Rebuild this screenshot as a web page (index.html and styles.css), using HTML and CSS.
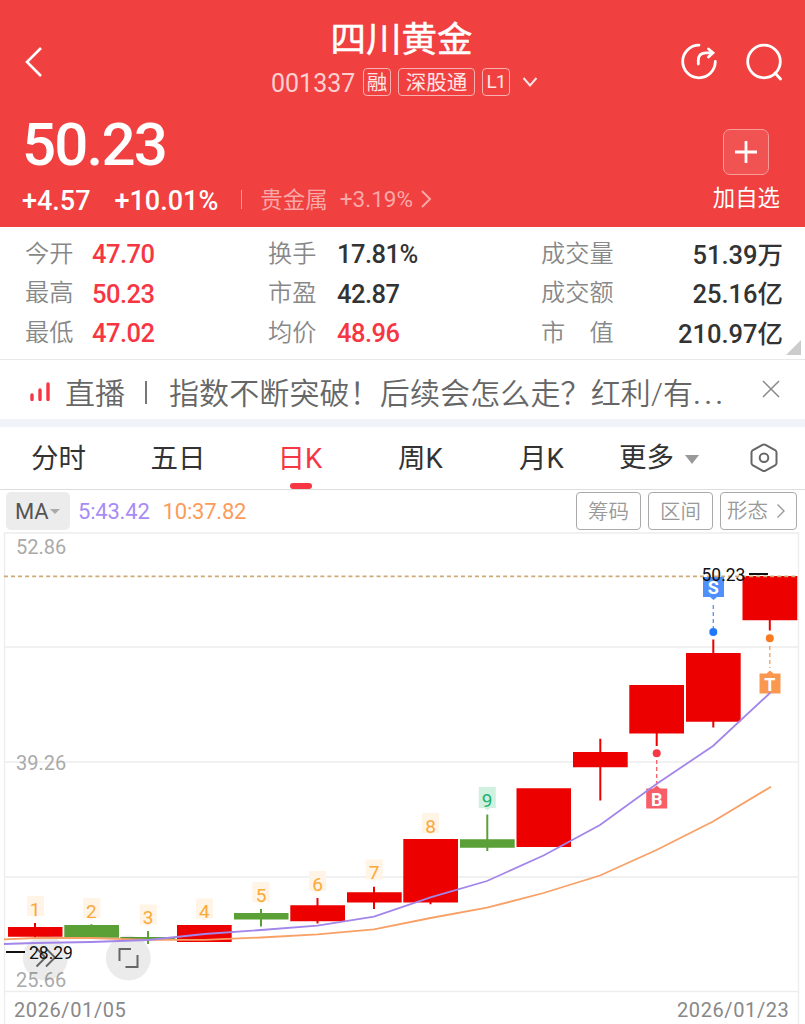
FILE: index.html
```html
<!DOCTYPE html>
<html lang="zh-CN">
  <head>
    <meta charset="utf-8">
    <title>四川黄金 001337</title>
    <link rel="stylesheet" href="styles.css">
  </head>
  <body>
    <header class="header">
      <div class="nav">
        <svg class="back" width="20" height="32" viewBox="0 0 20 32"><path d="M17 2 3 16l14 14"/></svg>
        <div class="stock">
          <h1>四川黄金</h1>
          <div class="code-row">
            <span class="code">001337</span>
            <span class="tag">融</span>
            <span class="tag tag-wide">深股通</span>
            <span class="tag tag-level">L1</span>
            <svg class="down" width="16" height="12" viewBox="0 0 16 12"><path d="M1.500 2 8 9.500 14.500 2"/></svg>
          </div>
        </div>
        <div class="nav-icons">
          <svg width="40" height="40" viewBox="0 0 40 40"><path d="M20 3.200A16.300 16.300 0 1 0 36.300 19.500M19.300 22V18.500Q19.300 10.800 27 10.800H33M29.500 7 34 10.800 29.500 15"/></svg>
          <svg width="40" height="40" viewBox="0 0 40 40"><circle cx="20" cy="19.500" r="16.300"/><path d="m31 31 5.500 6"/></svg>
        </div>
      </div>
      <div class="quote">
        <div>
          <div class="price">50.23</div>
          <div class="change">
            <span>+4.57</span>
            <span class="pct">+10.01%</span>
            <i class="sep"></i>
            <span class="sector">贵金属</span>
            <span class="sector-pct">+3.19%</span>
            <svg width="12" height="18" viewBox="0 0 12 18"><path d="m2 1 8 8-8 8"/></svg>
          </div>
        </div>
        <div class="add">
          <div class="add-box"><svg width="24" height="24" viewBox="0 0 24 24"><path d="M12 1v22M1 12h22"/></svg></div>
          <span>加自选</span>
        </div>
      </div>
    </header>

    <section class="stats">
      <span class="label">今开</span><b class="up">47.70</b>
      <span class="label">换手</span><b>17.81%</b>
      <span class="label">成交量</span><b class="right">51.39万</b>
      <span class="label">最高</span><b class="up">50.23</b>
      <span class="label">市盈</span><b>42.87</b>
      <span class="label">成交额</span><b class="right">25.16亿</b>
      <span class="label">最低</span><b class="up">47.02</b>
      <span class="label">均价</span><b class="up">48.96</b>
      <span class="label">市　值</span><b class="right">210.97亿</b>
      <i class="corner"></i>
    </section>

    <section class="notice">
      <svg class="live" width="20" height="20" viewBox="0 0 20 20"><path d="M2 13v4.500M10 8v9.500M18 2v15.500"/></svg>
      <span class="live-label">直播</span>
      <i class="bar"></i>
      <span class="live-text">指数不断突破！后续会怎么走？红利/有<span class="dots">...</span></span>
      <svg class="close" width="18" height="18" viewBox="0 0 18 18"><path d="m1 1 16 16M17 1 1 17"/></svg>
    </section>

    <nav class="tabs">
      <span>分时</span>
      <span>五日</span>
      <span class="active">日K</span>
      <span>周K</span>
      <span>月K</span>
      <div class="more">
        更多
        <i class="caret"></i>
        <svg width="30" height="32" viewBox="0 0 30 32"><path d="M13.500 2.800Q15 2 16.500 2.800L26 8Q27.500 9 27.500 10.500V21Q27.500 22.500 26 23.500L16.500 28.700Q15 29.500 13.500 28.700L4 23.500Q2.500 22.500 2.500 21V10.500Q2.500 9 4 8Z"/><circle cx="15" cy="15.700" r="4.300"/></svg>
      </div>
    </nav>

    <section class="tools">
      <span class="ma">MA<i class="caret small"></i></span>
      <span class="ma5">5:43.42</span>
      <span class="ma10">10:37.82</span>
      <span class="btn first">筹码</span>
      <span class="btn">区间</span>
      <span class="btn btn-arrow">形态<svg width="10" height="16" viewBox="0 0 10 16"><path d="m1.500 1.500 6.500 6.500-6.500 6.500"/></svg></span>
    </section>

    <svg class="chart" width="805" height="492" viewBox="0 532 805 492">
      <g class="grid">
        <path d="M4.500 1024V533H798.500V1024M4 647H798M4 762H798M4 877H798M4 991.500H798"/>
      </g>
      <text class="axis" x="16" y="553.500">52.86</text>
      <text class="axis" x="16" y="770">39.26</text>
      <text class="axis" x="16" y="986.500">25.66</text>

      <g class="red">
        <path d="M8 927h54.500v9.700H8zM34 923h2v15h-2z"/>
        <path d="M177 925h54.700v17H177z"/>
        <path d="M290.300 905.300H345v16h-54.700zM316.500 898h2v25.500h-2z"/>
        <path d="M347 892.300h54.700v10.200H347zM373 886.700h2V909h-2z"/>
        <path d="M403.300 839H458v63.500h-54.700zM429.500 902h2v2.300h-2z"/>
        <path d="M516.500 788.300H571V847h-54.500z"/>
        <path d="M573 752h54.700v15.300H573zM599.300 738.700h2v61.800h-2z"/>
        <path d="M629.300 685H684v48.500h-54.700zM655.700 733h2v13h-2z"/>
        <path d="M686 653h54.700v68.700H686zM712.300 639.500h2v88h-2z"/>
        <path d="M742.500 576H797.300v44.300h-54.800zM768.800 620h2v10.500h-2z"/>
      </g>
      <g class="green">
        <path d="M64.300 925H119v12.800H64.300zM90.500 924.300h2V939h-2z"/>
        <path d="M120.500 937h54.700v2h-54.700zM147 931h2v13h-2z"/>
        <path d="M234 913h54.500v6.500H234zM260 909h2v17.500h-2z"/>
        <path d="M460 839.300h54.700v8.500H460zM486.300 814.500h2V851h-2z"/>
      </g>
      <path class="high-line" d="M4 576.300H798"/>

      <g class="marker sell">
        <path d="M703 577h21v20h-7l-3.500 3-3.500-3h-7z"/>
        <path class="lead" d="M713.300 605v23"/>
        <circle cx="713.300" cy="632" r="4"/>
        <text x="713.300" y="593.500">S</text>
      </g>
      <g class="marker trade">
        <path d="M759.500 673.500h7l3.500-3 3.500 3h7v20h-21z"/>
        <path class="lead" d="M769.800 646v22"/>
        <circle cx="769.800" cy="638.300" r="4"/>
        <text x="769.800" y="690.500">T</text>
      </g>
      <g class="marker buy">
        <path d="M646.200 788.500h7l3.500-3 3.500 3h7v20h-21z"/>
        <path class="lead" d="M656.700 760v25"/>
        <circle cx="656.700" cy="753.300" r="4"/>
        <text x="656.700" y="805.500">B</text>
      </g>

      <g class="seq">
        <path d="M27 896h17v20h-6l-3 2-3-2h-5zM83.300 898h17v20h-6l-3 2-3-2h-5zM139.800 904.500h17v20h-6l-3 2-3-2h-5zM196 898.500h17v20h-6l-3 2-3-2h-5zM252.500 882h17v20h-6l-3 2-3-2h-5zM309 871h17v20h-6l-3 2-3-2h-5zM365.700 859.500h17v20h-6l-3 2-3-2h-5zM422 813h17v20h-6l-3 2-3-2h-5z"/>
        <text x="35" y="915.500">1</text>
        <text x="91.300" y="917.500">2</text>
        <text x="148" y="924">3</text>
        <text x="204.300" y="918">4</text>
        <text x="261" y="901.500">5</text>
        <text x="317.500" y="890.500">6</text>
        <text x="374" y="879">7</text>
        <text x="430.500" y="832.500">8</text>
      </g>
      <g class="seq nine">
        <path d="M478.800 787h17v21h-5.500l-3 2.500-3-2.500h-5.500z"/>
        <text x="487.200" y="806.500">9</text>
      </g>

      <g class="fab">
        <circle cx="45.300" cy="958" r="22.500"/>
        <circle cx="128.300" cy="958" r="22.500"/>
        <path d="m36.500 948.500 9 9-9 9M46 948.500l9 9-9 9"/>
        <path d="M119.500 961V949H131M137.500 955v12H125.500"/>
      </g>

      <polyline class="line10" points="4,939.300 35,938 91,938 148,939.800 204.500,939.800 261,937.500 317.500,934.300 374,929.300 430.500,918 487,907.700 543.500,893 600,875.500 656.500,850 713,821.500 771,786.700"/>
      <polyline class="line5" points="4,944 35,943 91,942 148,940 204.500,934 261,930 317.500,925.700 374,916.700 430.500,897.300 487,881 543.500,855.500 600,825 656.500,784 713,746 770.500,692.500"/>

      <path class="tick" d="M749 574H768M6 952H25"/>
      <text class="extreme" x="701.500" y="581">50.23</text>
      <text class="extreme" x="29" y="959">28.29</text>

      <text class="date" x="14" y="1017">2026/01/05</text>
      <text class="date" x="677" y="1017">2026/01/23</text>
    </svg>
  </body>
</html>
```
FILE: styles.css
```css
* {
  box-sizing: border-box;
}

body {
  margin: 0;
  width: 805px;
  height: 1024px;
  overflow: hidden;
  background: #fff;
  color: #333;
  font-family: Roboto, "Noto Sans CJK SC", sans-serif;
}

svg {
  display: block;
  flex: none;
  fill: none;
  stroke: currentColor;
  stroke-width: 2;
}

i {
  display: block;
  flex: none;
}

/* header */
.header {
  height: 227px;
  background: #f04040;
  color: #fff;
}

.nav {
  display: grid;
  grid-template-columns: 1fr 276px 1fr;
  align-items: center;
  height: 123px;
  padding: 0 21px 0 24px;
}

.back {
  stroke-width: 2.6;
}

.stock {
  padding-bottom: 9px;
}

.stock h1 {
  margin: 0 0 6px;
  padding-right: 5px;
  font-size: 35.5px;
  font-weight: 400;
  line-height: 44px;
  text-align: center;
  -webkit-text-stroke: 0.5px #fff;
}

.code-row {
  display: flex;
  align-items: center;
  height: 28px;
  color: #fcd0d0;
}

.code {
  width: 97px;
  padding-left: 5px;
  padding-top: 2px;
  font-size: 25px;
}

.tag {
  width: 28px;
  height: 28px;
  margin-right: 7px;
  border: 1px solid #f9b0b0;
  border-radius: 4px;
  color: #ffe4e4;
  font-size: 20.5px;
  line-height: 28px;
  text-align: center;
}

.tag-wide {
  width: 77px;
}

.tag-level {
  margin-right: 12px;
  font-size: 19px;
  line-height: 26px;
  letter-spacing: -1px;
}

.down {
  stroke: #ffe4e4;
}

.nav-icons {
  display: flex;
  justify-content: flex-end;
  gap: 25px;
}

.nav-icons svg {
  stroke-width: 2.8;
  stroke-linecap: round;
}

.quote {
  display: flex;
  justify-content: space-between;
  padding: 0 25px 0 22px;
}

.price {
  height: 61px;
  font-size: 60px;
  font-weight: 500;
  line-height: 44px;
  letter-spacing: -1.8px;
}

.change {
  display: flex;
  align-items: center;
  height: 32px;
  padding-top: 1px;
  font-size: 27px;
  font-weight: 500;
}

.pct {
  margin-left: 24px;
}

.sep {
  width: 1px;
  height: 19px;
  margin: -3px 18px 0 23px;
  background: #f79b9b;
}

.sector,
.sector-pct {
  margin-top: -6px;
  color: #f9a8a8;
  font-size: 22.5px;
  font-weight: 400;
}

.sector-pct {
  margin: -3px 8px 0 12px;
}

.change svg {
  margin-top: -4px;
  margin-left: -1px;
  stroke: #f9a8a8;
}

.add {
  display: flex;
  flex-direction: column;
  align-items: center;
  padding-top: 6px;
  font-size: 22.4px;
  line-height: 32px;
}

.add-box {
  display: flex;
  align-items: center;
  justify-content: center;
  width: 46px;
  height: 46px;
  margin-bottom: 7px;
  border: 1px solid #f89c9c;
  border-radius: 7px;
  background: #f15353;
}

.add-box svg {
  stroke-width: 2.8;
}

/* figures */
.stats {
  position: relative;
  display: grid;
  grid-template-columns: 67px 176px 69px 204px 80px 1fr;
  grid-auto-rows: 39.5px;
  align-items: center;
  height: 133px;
  padding: 7px 22px 0 25px;
  border-bottom: 1px solid #e8e8e8;
}

.stats b {
  padding-top: 1px;
  font-size: 25.5px;
  font-weight: 500;
  letter-spacing: -0.5px;
}

.label {
  padding-bottom: 5px;
  color: #888;
  font-size: 24.2px;
  font-weight: 350;
  white-space: nowrap;
}

.stats .up {
  color: #f73643;
}

.stats .right {
  padding-bottom: 4px;
  letter-spacing: 0;
  text-align: right;
}

.corner {
  position: absolute;
  right: 4px;
  bottom: 4px;
  border-bottom: 15px solid #ccc;
  border-left: 15px solid transparent;
}

/* live notice */
.notice {
  display: flex;
  align-items: center;
  height: 67px;
  padding: 0 25px 0 30px;
  border-bottom: 8px solid #f2f3f8;
  color: #666;
  font-size: 30px;
  font-weight: 350;
  white-space: nowrap;
}

.live {
  margin-top: 5px;
  color: #f73643;
  stroke-width: 3.4;
  stroke-linecap: round;
}

.live-label {
  margin: 2px 20px 0 15px;
}

.bar {
  width: 2px;
  height: 23px;
  margin: 6px 22px 0 0;
  background: #777;
}

.live-text {
  margin-top: 2px;
  letter-spacing: 0.12px;
}

.dots {
  font-weight: 400;
  letter-spacing: 3.2px;
}

.close {
  margin-left: auto;
  margin-top: -1px;
  color: #888;
  stroke-width: 1.5;
}

/* period tabs */
.tabs {
  display: grid;
  grid-template-columns: 117px 122px 122px 119px 123px 1fr;
  height: 63px;
  border-bottom: 1px solid #ddd;
  font-size: 27.5px;
  line-height: 64px;
  text-align: center;
}

.tabs .active {
  position: relative;
  color: #f73643;
}

.active::after {
  content: "";
  position: absolute;
  bottom: 2px;
  left: 51px;
  width: 22px;
  height: 6px;
  border-radius: 3px;
  background: #f73643;
}

.more {
  display: flex;
  align-items: center;
  height: 62px;
  padding-left: 16px;
}

.caret {
  margin: 2px 50px 0 11px;
  border-top: 9px solid #999;
  border-left: 7px solid transparent;
  border-right: 7px solid transparent;
}

.more svg {
  color: #666;
}

/* indicator row */
.tools {
  display: flex;
  align-items: center;
  height: 42px;
  padding: 0 8px 0 6px;
  font-size: 22px;
  letter-spacing: -0.2px;
}

.ma {
  display: flex;
  align-items: center;
  width: 64px;
  height: 38px;
  margin-right: 8px;
  padding-left: 9px;
  border-radius: 5px;
  background: #ececec;
  color: #555;
}

.small {
  margin: 0 0 0 2px;
  border-width: 5px 5px 0;
  border-top-color: #aaa;
}

.ma5 {
  color: #a78bf5;
}

.ma10 {
  margin-left: 13px;
  color: #fb9c5b;
}

.btn {
  width: 65px;
  height: 38px;
  margin-left: 7px;
  border: 1px solid #aaa;
  border-radius: 4px;
  color: #999;
  font-size: 20.5px;
  font-weight: 350;
  line-height: 38px;
  letter-spacing: 0;
  text-align: center;
}

.first {
  margin-left: auto;
}

.btn-arrow {
  display: flex;
  align-items: center;
  gap: 8px;
  width: 77px;
  padding-left: 6px;
}

.btn svg {
  stroke-width: 1.4;
}

/* candlestick chart */
.chart text {
  stroke: none;
}

.grid {
  stroke: #ededed;
  stroke-width: 1.4;
}

.axis {
  fill: #aaa;
  font-size: 20px;
}

.red {
  fill: #ec0000;
  stroke: none;
}

.green {
  fill: #5ba037;
  stroke: none;
}

.high-line {
  stroke: #cfaa76;
  stroke-width: 1.8;
  stroke-dasharray: 4 3.03;
}

.marker {
  stroke: none;
}

.marker text {
  fill: #fff;
  font-size: 18px;
  font-weight: 700;
  text-anchor: middle;
}

.marker .lead {
  stroke-width: 1.3;
  stroke-dasharray: 4 3;
}

.sell {
  fill: #5090fc;
}

.sell .lead {
  stroke: #5090fc;
}

.sell circle {
  fill: #2078fa;
}

.trade {
  fill: #fb9850;
}

.trade .lead {
  stroke: #fb9850;
}

.trade circle {
  fill: #fa7a20;
}

.buy {
  fill: #f85e68;
}

.buy .lead {
  stroke: #f85e68;
}

.buy circle {
  fill: #f53844;
}

.seq {
  fill: #fff4e6;
  stroke: none;
}

.seq text {
  fill: #f9a938;
  font-size: 19px;
  text-anchor: middle;
}

.nine {
  fill: #d0f0e0;
}

.nine text {
  fill: #20b070;
}

.fab {
  stroke: #666;
}

.fab circle {
  fill: #000;
  fill-opacity: 0.08;
  stroke: none;
}

.line5,
.line10 {
  stroke: #a286ea;
  stroke-width: 1.8;
}

.line10 {
  stroke: #f8a066;
}

.tick {
  stroke: #111;
  stroke-width: 1.8;
}

.extreme {
  fill: #111;
  font-size: 17.5px;
}

.date {
  fill: #888;
  font-size: 20px;
  letter-spacing: 0.6px;
}
```
